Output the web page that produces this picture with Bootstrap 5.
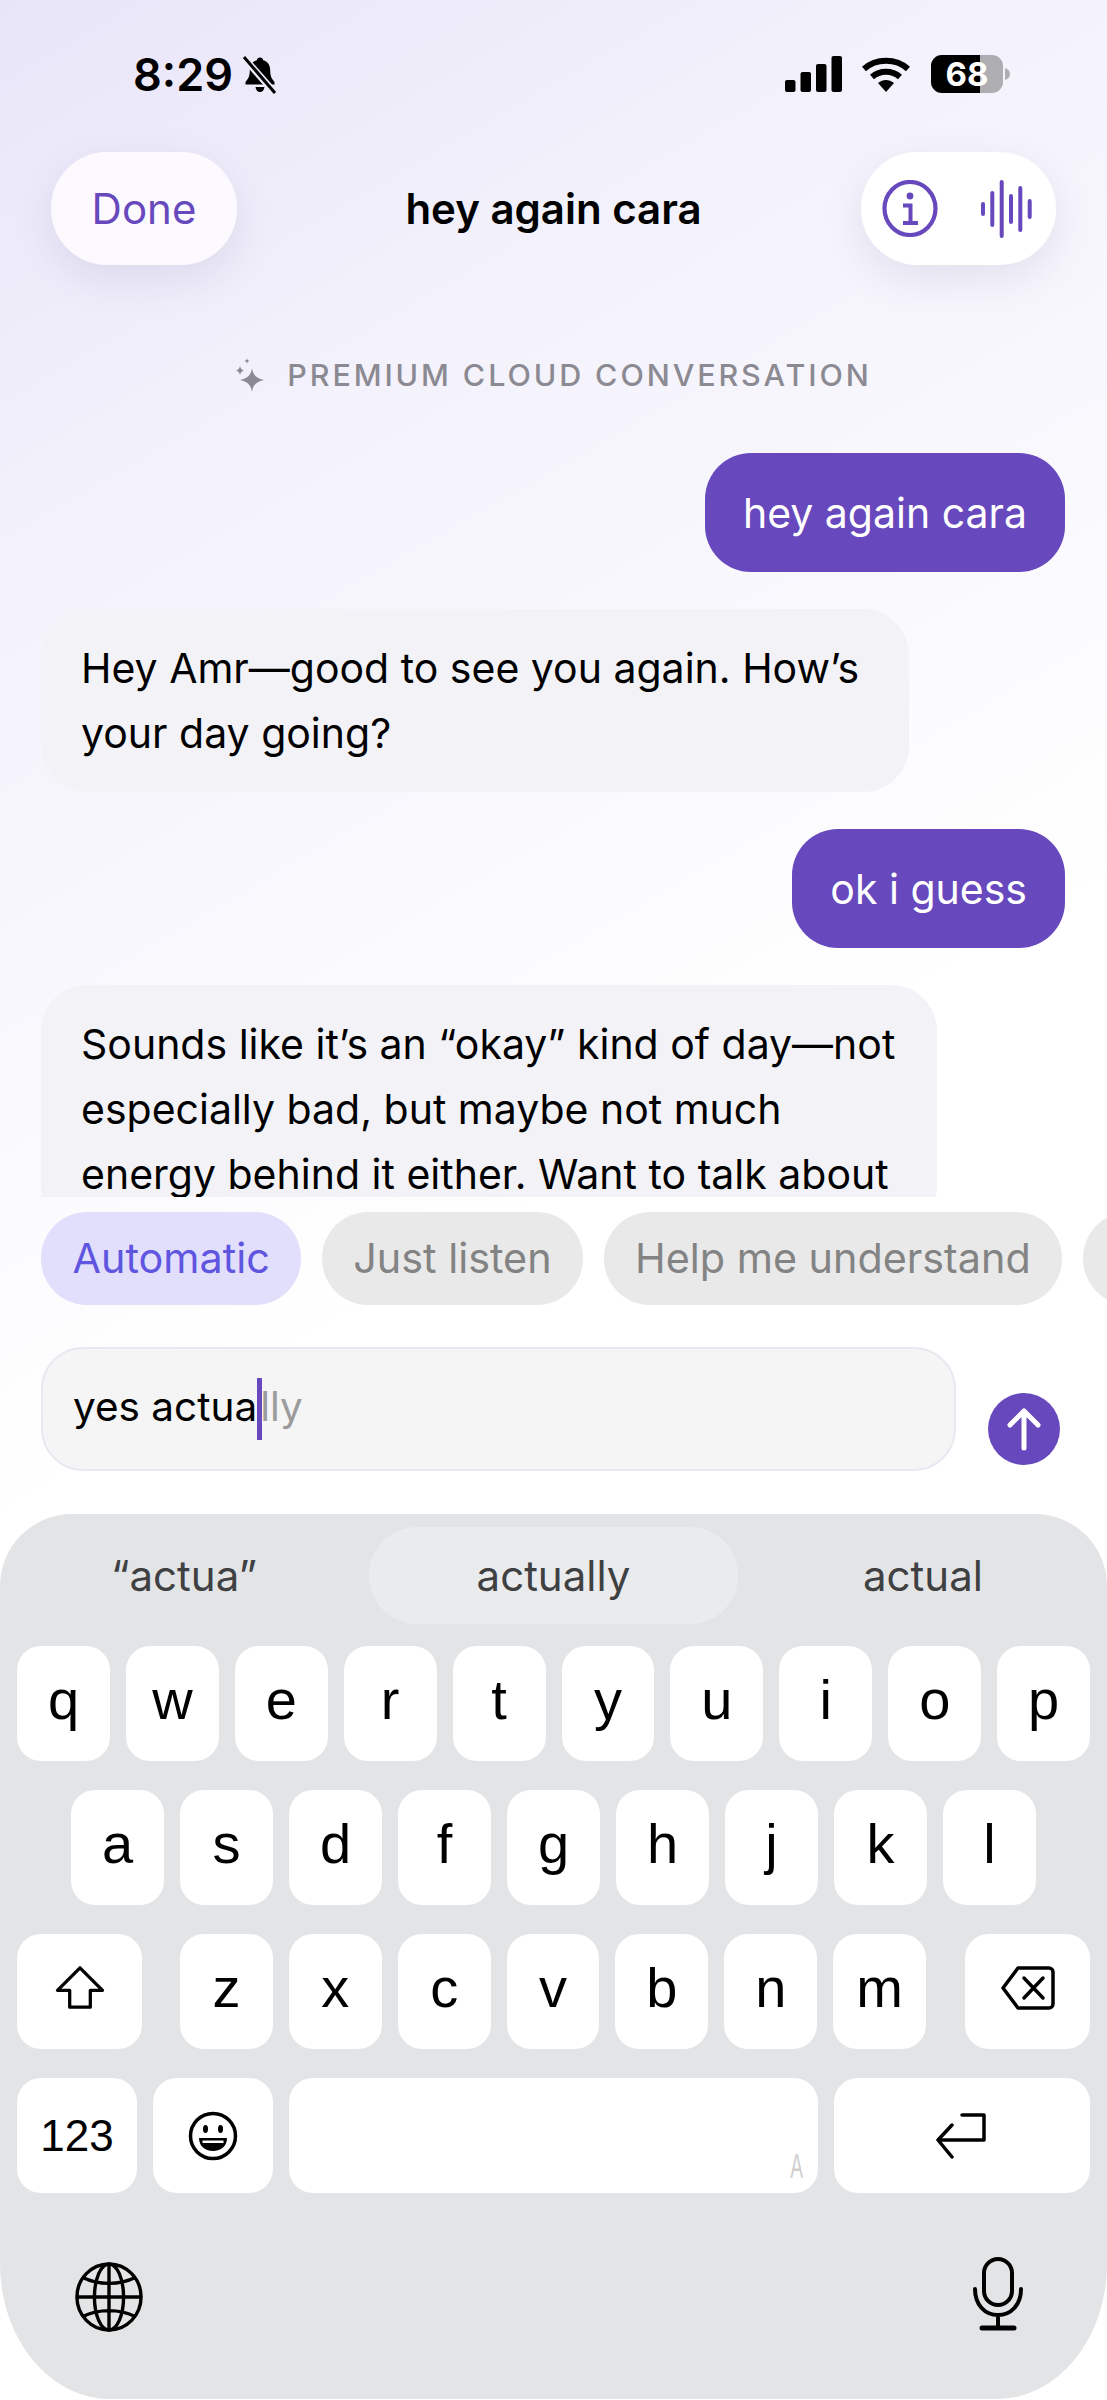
<!DOCTYPE html>
<html lang="en">
<head>
    <meta charset="UTF-8">
    <meta name="viewport" content="width=device-width, initial-scale=1.0">
    <title>hey again cara</title>
    <link href="https://cdn.jsdelivr.net/npm/bootstrap@5.3.0/dist/css/bootstrap.min.css" rel="stylesheet">
    <style>
        html, body { margin: 0; background: #fff; }
        body { font-family: Inter, "Liberation Sans", sans-serif; color: #000; }
        .phone { width: 1107px; height: 2400px; overflow: hidden;
            background: linear-gradient(150deg, #e9e5f9 0%, #f3f1fb 18%, #f8f7fd 32%, #ffffff 50%); }
        .status-row { height: 152px; padding: 55px 97px 0 133px; }
        .clock { font-size: 45px; font-weight: 600; line-height: 40px; }
        .top-row { height: 113px; padding: 0 51px; }
        .glass-pill { height: 113px; border-radius: 56px; background: #fcfaff; box-shadow: 0 14px 40px rgba(90, 80, 140, .12); }
        .done-pill { width: 186px; color: #6748bd; font-size: 42px; }
        .tools-pill { width: 195px; background: #fff; padding: 0 24px 0 21px; }
        .top-title { font-size: 42px; font-weight: 600; margin-left: 9px; }
        .tier-row { height: 188px; padding-top: 32px; gap: 22px; color: #8b8a92; font-size: 30.500px; font-weight: 500; letter-spacing: 2.9px; }
        .chat-area { height: 744px; overflow: hidden; padding: 0 42px 0 41px; }
        .bubble { font-size: 41px; line-height: 65px; padding: 26.500px 40px; border-radius: 46px; margin-bottom: 37px; }
        .bubble-me { background: #6748bd; color: #fff; padding: 27.500px 38px; line-height: 64px; }
        .bubble-ai { background: #f3f3f7; width: 868px; }
        .chip-row { padding-left: 41px; gap: 20.500px; height: 93px; margin-top: 15px; overflow: hidden; }
        .mode-chip { height: 93px; border-radius: 46px; font-size: 41.300px; padding: 0 31.500px; background: #e9e9e9; color: #838383; flex: none; white-space: nowrap; }
        .mode-chip.chip-on { background: #e1dffb; color: #5f55e0; }
        .chip-end { width: 120px; }
        .compose-row { padding: 42px 47px 0 41px; height: 210px; }
        .compose-box { width: 915px; height: 124px; border: 2px solid #e9e8f1; border-radius: 42px; background: #f5f5f5; padding: 0 30px 4px; font-size: 40.500px; }
        .typed-ghost { color: #9b9b9b; }
        .caret-bar { width: 5px; height: 62px; background: #6748bd; margin: 4px -2px 0 0; flex: none; }
        .send-dot { width: 72px; height: 72px; border-radius: 50%; background: #6748bd; margin-top: 46px; }
        .kbd { height: 885px; background: #e3e4e6; border-radius: 72px 72px 110px 110px / 72px 72px 135px 135px; padding: 13px 17px 0; margin-top: -1px; }
        .suggest-row { height: 97px; margin-bottom: 22px; font-size: 42px; color: #3f4042; }
        .suggest-cell { width: 352px; height: 97px; }
        .suggest-first { padding-right: 18px; }
        .suggest-last { padding-left: 18px; }
        .suggest-mid { width: 369px; background: #eaebed; border-radius: 48px; }
        .key-row { gap: 16px; height: 115px; margin-bottom: 29px; }
        .kb-key { flex: 1 1 0; background: #fff; border-radius: 24px; font-size: 56px; line-height: 1; padding-bottom: 8px; font-family: "Liberation Sans", sans-serif; }
        .row-inset { padding: 0 54px; }
        .side-key { flex: 0 0 125px; margin: 0; }
        .letters-group { gap: 16px; flex: 1; margin: 0 39px 0 38px; }
        .num-key { flex: 0 0 120px; font-size: 44px; padding: 0; }
        .emoji-key { flex: 0 0 120px; padding: 0; }
        .space-key { flex: 0 0 529px; position: relative; }
        .space-mark { position: absolute; right: 10px; bottom: 12px; font-size: 35px; color: #cfcfcf; line-height: .85; transform: scaleX(.55); }
        .return-key { flex: 1 1 0; padding: 0; }
        .kbd-foot { padding: 30px 67px 0 58px; }
        .globe-icon { margin-top: 10px; }
        .mic-icon { margin-top: 5px; }
    </style>
</head>
<body>
    <div class="phone">
        <div class="status-row d-flex justify-content-between align-items-start">
            <div class="d-flex align-items-center gap-2">
                <span class="clock">8:29</span>
                <svg width="38" height="40" viewBox="0 0 38 38"><path d="M19 1.500c1.800 0 3 1.200 3.200 2.800 5 1.200 7 5.500 7 10 0 6 1.500 8.500 4.300 11.700v2.500H4.500V26c2.800-3.200 4.300-5.700 4.300-11.700 0-4.500 2-8.800 7-10C16 2.700 17.200 1.500 19 1.500zM14.500 31h9c-.3 3-2.200 5-4.500 5s-4.200-2-4.500-5z" fill="#000"/><path d="M4 3l29 33" stroke="#ecebf9" stroke-width="7"/><path d="M3 1l31 36" stroke="#000" stroke-width="3"/></svg>
            </div>
            <div class="d-flex align-items-center" style="gap:20px">
                <svg width="57" height="36" viewBox="0 0 57 36"><g fill="#000"><rect x="0" y="24" width="10.500" height="12" rx="2"/><rect x="15.500" y="16" width="10.500" height="20" rx="2"/><rect x="31" y="8" width="10.500" height="28" rx="2"/><rect x="46.500" y="0" width="10.500" height="36" rx="2"/></g></svg>
                <svg width="48" height="36" viewBox="0 0 48 36"><g fill="none" stroke="#000" stroke-width="6"><path d="M2 13c12-11 32-11 44 0"/><path d="M10 21c8-7 20-7 28 0"/></g><path d="M16 27c5-4 11-4 16 0l-8 9z" fill="#000"/></svg>
                <svg width="79" height="38" viewBox="0 0 79 38" style="margin-left:1px"><rect x="0" y="0" width="72" height="38" rx="11" fill="#aeaeb2"/><path d="M11 0h38v38H11A11 11 0 0 1 0 27V11A11 11 0 0 1 11 0z" fill="#000"/><path d="M74 13c3 1 5 3 5 6s-2 5-5 6z" fill="#aeaeb2"/><text x="36" y="31" text-anchor="middle" font-family="Inter, sans-serif" font-weight="700" font-size="33" fill="#fff">68</text></svg>
            </div>
        </div>

        <div class="top-row d-flex justify-content-between align-items-center position-relative">
            <div class="glass-pill done-pill d-flex align-items-center justify-content-center">Done</div>
            <div class="top-title">hey again cara</div>
            <div class="glass-pill tools-pill d-flex align-items-center justify-content-between">
                <svg width="56" height="57" viewBox="0 0 56 57" fill="none" stroke="#6748bd"><ellipse cx="28" cy="28.500" rx="25.500" ry="26.500" stroke-width="4.200"/><path d="M21 25.500h7.500V43M21 43h15" stroke-width="4"/><circle cx="28" cy="16" r="3.400" fill="#6748bd" stroke="none"/></svg>
                <svg width="51" height="60" viewBox="0 0 51 60" fill="none" stroke="#6748bd" stroke-width="4" stroke-linecap="round"><path d="M2 25v10M11.300 14v32M20.700 3v54M30 17v26M39.300 9v42M48.700 22v16"/></svg>
            </div>
        </div>

        <div class="tier-row d-flex align-items-center justify-content-center">
            <svg width="30" height="34" viewBox="0 0 30 34" fill="#8b8a92"><path d="M17 10c1 7 4 10 12 12-8 2-11 5-12 12-1-7-4-10-12-12 8-2 11-5 12-12z"/><path d="M5 8c.5 2.500 1.300 3.500 4 4.500-2.700 1-3.500 2-4 4.500-.5-2.500-1.300-3.500-4-4.500 2.700-1 3.500-2 4-4.500zM12 0c.3 1.800.8 2.500 2.500 3C12.800 3.500 12.300 4.200 12 6c-.3-1.800-.8-2.500-2.500-3C11.200 2.500 11.700 1.800 12 0z"/></svg>
            <span>PREMIUM CLOUD CONVERSATION</span>
        </div>

        <div class="chat-area d-flex flex-column">
            <div class="bubble bubble-me align-self-end">hey again cara</div>
            <div class="bubble bubble-ai">Hey Amr—good to see you again. How’s your day going?</div>
            <div class="bubble bubble-me align-self-end">ok i guess</div>
            <div class="bubble bubble-ai flex-shrink-0" style="width:896px">Sounds like it’s an “okay” kind of day—not especially bad, but maybe not much energy behind it either. Want to talk about</div>
        </div>

        <div class="chip-row d-flex">
            <div class="mode-chip chip-on d-flex align-items-center">Automatic</div>
            <div class="mode-chip d-flex align-items-center">Just listen</div>
            <div class="mode-chip d-flex align-items-center">Help me understand</div>
            <div class="mode-chip chip-end"></div>
        </div>

        <div class="compose-row d-flex justify-content-between align-items-start">
            <div class="compose-box d-flex align-items-center">
                <span>yes actua</span><span class="caret-bar"></span><span class="typed-ghost">lly</span>
            </div>
            <div class="send-dot d-flex align-items-center justify-content-center">
                <svg width="36" height="44" viewBox="0 0 36 44" fill="none" stroke="#fff" stroke-width="5" stroke-linecap="round" stroke-linejoin="round"><path d="M18 41V4M4 18L18 4l14 14"/></svg>
            </div>
        </div>

        <div class="kbd">
            <div class="suggest-row d-flex">
                <div class="suggest-cell suggest-first d-flex align-items-center justify-content-center">“actua”</div>
                <div class="suggest-cell suggest-mid d-flex align-items-center justify-content-center">actually</div>
                <div class="suggest-cell suggest-last d-flex align-items-center justify-content-center">actual</div>
            </div>
            <div class="key-row d-flex">
                <div class="kb-key d-flex align-items-center justify-content-center">q</div>
                <div class="kb-key d-flex align-items-center justify-content-center">w</div>
                <div class="kb-key d-flex align-items-center justify-content-center">e</div>
                <div class="kb-key d-flex align-items-center justify-content-center">r</div>
                <div class="kb-key d-flex align-items-center justify-content-center">t</div>
                <div class="kb-key d-flex align-items-center justify-content-center">y</div>
                <div class="kb-key d-flex align-items-center justify-content-center">u</div>
                <div class="kb-key d-flex align-items-center justify-content-center">i</div>
                <div class="kb-key d-flex align-items-center justify-content-center">o</div>
                <div class="kb-key d-flex align-items-center justify-content-center">p</div>
            </div>
            <div class="key-row row-inset d-flex">
                <div class="kb-key d-flex align-items-center justify-content-center">a</div>
                <div class="kb-key d-flex align-items-center justify-content-center">s</div>
                <div class="kb-key d-flex align-items-center justify-content-center">d</div>
                <div class="kb-key d-flex align-items-center justify-content-center">f</div>
                <div class="kb-key d-flex align-items-center justify-content-center">g</div>
                <div class="kb-key d-flex align-items-center justify-content-center">h</div>
                <div class="kb-key d-flex align-items-center justify-content-center">j</div>
                <div class="kb-key d-flex align-items-center justify-content-center">k</div>
                <div class="kb-key d-flex align-items-center justify-content-center">l</div>
            </div>
            <div class="key-row d-flex" style="gap:0">
                <div class="kb-key side-key d-flex align-items-center justify-content-center">
                    <svg width="54" height="45" viewBox="0 0 54 48" fill="none" stroke="#000" stroke-width="3.500" stroke-linejoin="round"><path d="M27 3L3 27h13v18h22V27h13z"/></svg>
                </div>
                <div class="letters-group d-flex">
                    <div class="kb-key d-flex align-items-center justify-content-center">z</div>
                    <div class="kb-key d-flex align-items-center justify-content-center">x</div>
                    <div class="kb-key d-flex align-items-center justify-content-center">c</div>
                    <div class="kb-key d-flex align-items-center justify-content-center">v</div>
                    <div class="kb-key d-flex align-items-center justify-content-center">b</div>
                    <div class="kb-key d-flex align-items-center justify-content-center">n</div>
                    <div class="kb-key d-flex align-items-center justify-content-center">m</div>
                </div>
                <div class="kb-key side-key d-flex align-items-center justify-content-center">
                    <svg width="56" height="46" viewBox="0 0 56 46" fill="none" stroke="#000" stroke-width="3.500" stroke-linejoin="round"><path d="M18 3h31a4 4 0 0 1 4 4v32a4 4 0 0 1-4 4H18L3 23z"/><path d="M24 13l19 20M43 13L24 33" stroke-linecap="round"/></svg>
                </div>
            </div>
            <div class="key-row d-flex">
                <div class="kb-key num-key d-flex align-items-center justify-content-center">123</div>
                <div class="kb-key emoji-key d-flex align-items-center justify-content-center">
                    <svg width="50" height="50" viewBox="0 0 50 50" fill="none" stroke="#000" stroke-width="3.500"><circle cx="25" cy="25" r="22.500"/><ellipse cx="17.500" cy="18" rx="2.500" ry="4" fill="#000" stroke="none"/><ellipse cx="32.500" cy="18" rx="2.500" ry="4" fill="#000" stroke="none"/><path d="M11 27h28c0 8-6 13-14 13s-14-5-14-13z" fill="#000" stroke="none"/><path d="M14.500 29.500h21v2.500h-21z" fill="#fff" stroke="none"/></svg>
                </div>
                <div class="kb-key space-key"><span class="space-mark">A</span></div>
                <div class="kb-key return-key d-flex align-items-center justify-content-center">
                    <svg width="54" height="46" viewBox="0 0 54 46" fill="none" stroke="#000" stroke-width="3.500" stroke-linecap="round" stroke-linejoin="round"><path d="M27 2h22v25H3M17 12L3 27l14 17"/></svg>
                </div>
            </div>
            <div class="kbd-foot d-flex justify-content-between align-items-start">
                <svg class="globe-icon" width="68" height="70" viewBox="0 0 70 72" fill="none" stroke="#000" stroke-width="3.500"><ellipse cx="35" cy="36" rx="33" ry="34"/><ellipse cx="35" cy="36" rx="15" ry="34"/><path d="M35 2v68M2 36h66M8 16c16 8 38 8 54 0M8 56c16-8 38-8 54 0"/></svg>
                <svg class="mic-icon" width="50" height="74" viewBox="0 0 50 74" fill="none" stroke="#000" stroke-width="4" stroke-linecap="round"><rect x="11" y="2" width="28" height="46" rx="14"/><path d="M2 32c0 16 10 26 23 26s23-10 23-26M25 58v13"/><path d="M9 71h32" stroke-width="5"/></svg>
            </div>
        </div>
    </div>

    <script src="https://cdn.jsdelivr.net/npm/bootstrap@5.3.0/dist/js/bootstrap.bundle.min.js"></script>
</body>
</html>
